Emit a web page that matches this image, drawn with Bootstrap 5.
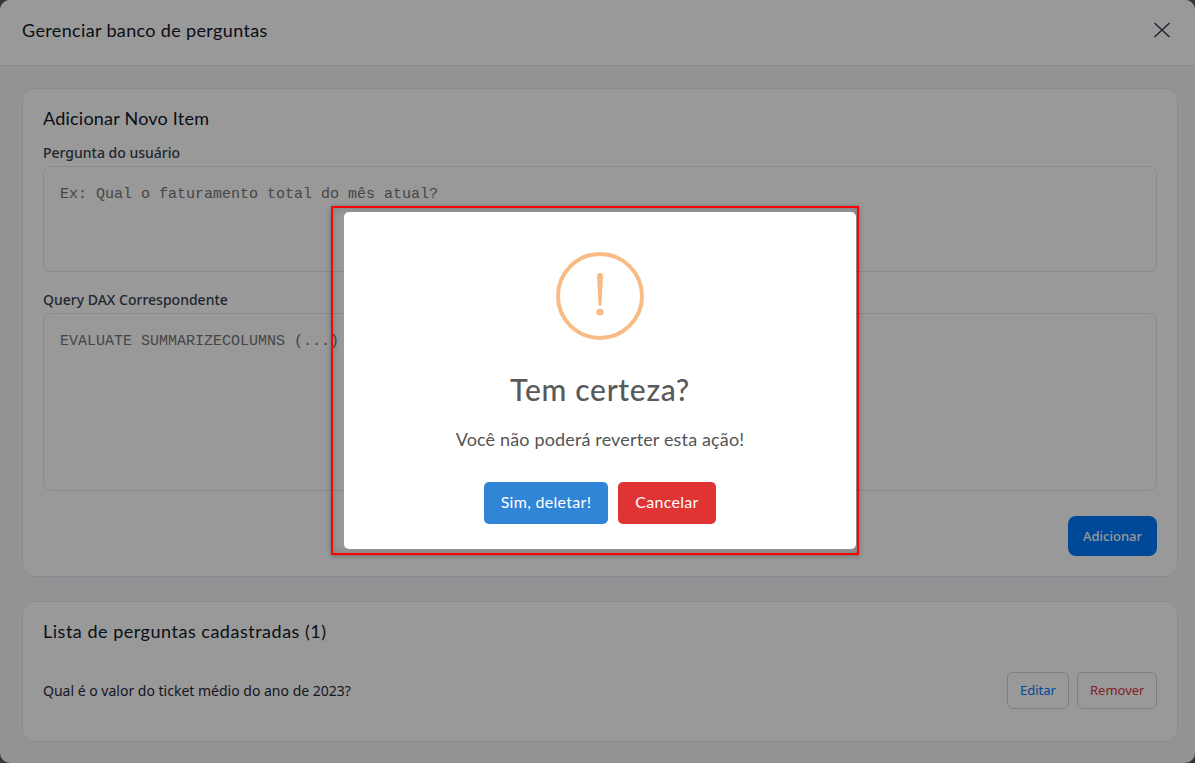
<!DOCTYPE html>
<html lang="pt-BR"><head><meta charset="utf-8"><title>Gerenciar banco de perguntas</title>
<link href="https://cdn.jsdelivr.net/npm/bootstrap@5.3.0/dist/css/bootstrap.min.css" rel="stylesheet">
<style>
html,body{height:100%;overflow:hidden}
body{background:#5a5a5a;font-family:"Noto Sans",sans-serif;color:#1f2937}
.gb-shell{height:763px;background:#f4f5f7;border-radius:10px;overflow:hidden}
.gb-head{height:66px;background:#fff;border-bottom:1px solid #e5e7eb;padding:0 24px 5px 22px}
.gb-head h5{font:400 18px/22px "Lato",sans-serif;letter-spacing:.35px;margin:0;color:#111827}
.gb-body{padding:22px 17px 0 22px}
.gb-panel{border:1px solid #e5e7eb;border-radius:12px;background:#fff;padding:18px 20px 0;margin-bottom:24px}
.gb-panel-form{height:489px}
.gb-panel-list{height:141px}
.gb-panel h6{font:400 18px/22px "Lato",sans-serif;letter-spacing:.22px;color:#111827;margin:0 0 14px}
.gb-panel-list h6{letter-spacing:.51px;margin:0 0 30px}
.gb-label{font-size:14px;font-weight:500;margin:0 0 3px;line-height:20px;color:#374151}
.gb-field{font-family:"Liberation Mono",monospace;font-size:15px;line-height:20px;border:1px solid #e5e7eb;border-radius:8px;padding:18px 16px;resize:none;width:100%;display:block;color:#1f2937;background:#fff}
.gb-field::placeholder{color:#757575;opacity:1}
.gb-field-a{height:106px;margin-bottom:18px}
.gb-field-b{height:178px;margin-bottom:25px}
.gb-add{background:#0078fd;color:#fff;border:0;border-radius:8px;font-size:13px;font-weight:500;width:89px;height:40px;padding:1px 0 0}
.gb-ghost{background:#fff;border:1px solid #d1d5db;border-radius:6px;font-size:13px;height:37px;padding:0 12px}
.gb-ghost-blue{color:#007bff;width:62px}
.gb-ghost-red{color:#dc3545;width:80px}
.gb-question{font-size:14px}
.gb-scrim{position:fixed;inset:0;background:rgba(0,0,0,.4)}
.gb-frame{position:absolute;left:331px;top:206px;width:528px;height:349px;border:2px solid #f00;padding:4px 1px 4px 11px;box-shadow:0 1px 5px rgba(0,0,0,.3),inset 0 0 8px rgba(0,0,0,.2)}
.gb-alert{height:100%;background:#fff;border-radius:5px;text-align:center;color:#545454;font-family:"Lato",sans-serif;padding-top:40px}
.gb-alert h2{font:500 30px/36px "Lato",sans-serif;letter-spacing:.7px;color:#595959;margin:31px 0 0}
.gb-alert p{font-size:18px;line-height:24px;letter-spacing:.15px;margin:20px 0 31px}
.gb-cta{color:#fff;border:0;border-radius:5px;height:42px;font:400 16px "Lato",sans-serif;letter-spacing:.3px;padding:0 0 3px}
.gb-cta-ok{background:#3085d6;width:124px}
.gb-cta-no{background:#e03333;width:98px}
.gb-gap{gap:10px}
</style></head><body>
<div class="gb-shell">
 <div class="gb-head d-flex align-items-center justify-content-between">
  <h5>Gerenciar banco de perguntas</h5>
  <svg width="18" height="18" viewBox="0 0 18 18"><path d="M1.5 2 16.5 16M16.5 2 1.5 16" stroke="#374151" stroke-width="1.5"/></svg>
 </div>
 <div class="gb-body">
  <div class="gb-panel gb-panel-form">
   <h6>Adicionar Novo Item</h6>
   <div class="gb-label">Pergunta do usuário</div>
   <textarea class="gb-field gb-field-a" placeholder="Ex: Qual o faturamento total do mês atual?"></textarea>
   <div class="gb-label">Query DAX Correspondente</div>
   <textarea class="gb-field gb-field-b" placeholder="EVALUATE SUMMARIZECOLUMNS (...)"></textarea>
   <div class="d-flex justify-content-end"><button class="gb-add">Adicionar</button></div>
  </div>
  <div class="gb-panel gb-panel-list">
   <h6>Lista de perguntas cadastradas (1)</h6>
   <div class="d-flex justify-content-between align-items-center">
    <span class="gb-question">Qual é o valor do ticket médio do ano de 2023?</span>
    <span class="d-flex gap-2"><button class="gb-ghost gb-ghost-blue">Editar</button><button class="gb-ghost gb-ghost-red">Remover</button></span>
   </div>
  </div>
 </div>
</div>
<div class="gb-scrim"></div>
<div class="gb-frame"><div class="gb-alert">
 <svg width="88" height="88" viewBox="0 0 88 88"><circle cx="44" cy="44" r="42" fill="none" stroke="#f8bb86" stroke-width="4"/><path d="M41 24a3 3 0 0 1 6 0L45.5 52.5a1.5 1.5 0 0 1-3 0Z" fill="#f8bb86"/><circle cx="44" cy="60" r="3.6" fill="#f8bb86"/></svg>
 <h2>Tem certeza?</h2>
 <p>Você não poderá reverter esta ação!</p>
 <div class="d-flex justify-content-center gb-gap">
  <button class="gb-cta gb-cta-ok">Sim, deletar!</button>
  <button class="gb-cta gb-cta-no">Cancelar</button>
 </div>
</div></div>
<script src="https://cdn.jsdelivr.net/npm/bootstrap@5.3.0/dist/js/bootstrap.bundle.min.js"></script>
</body></html>
